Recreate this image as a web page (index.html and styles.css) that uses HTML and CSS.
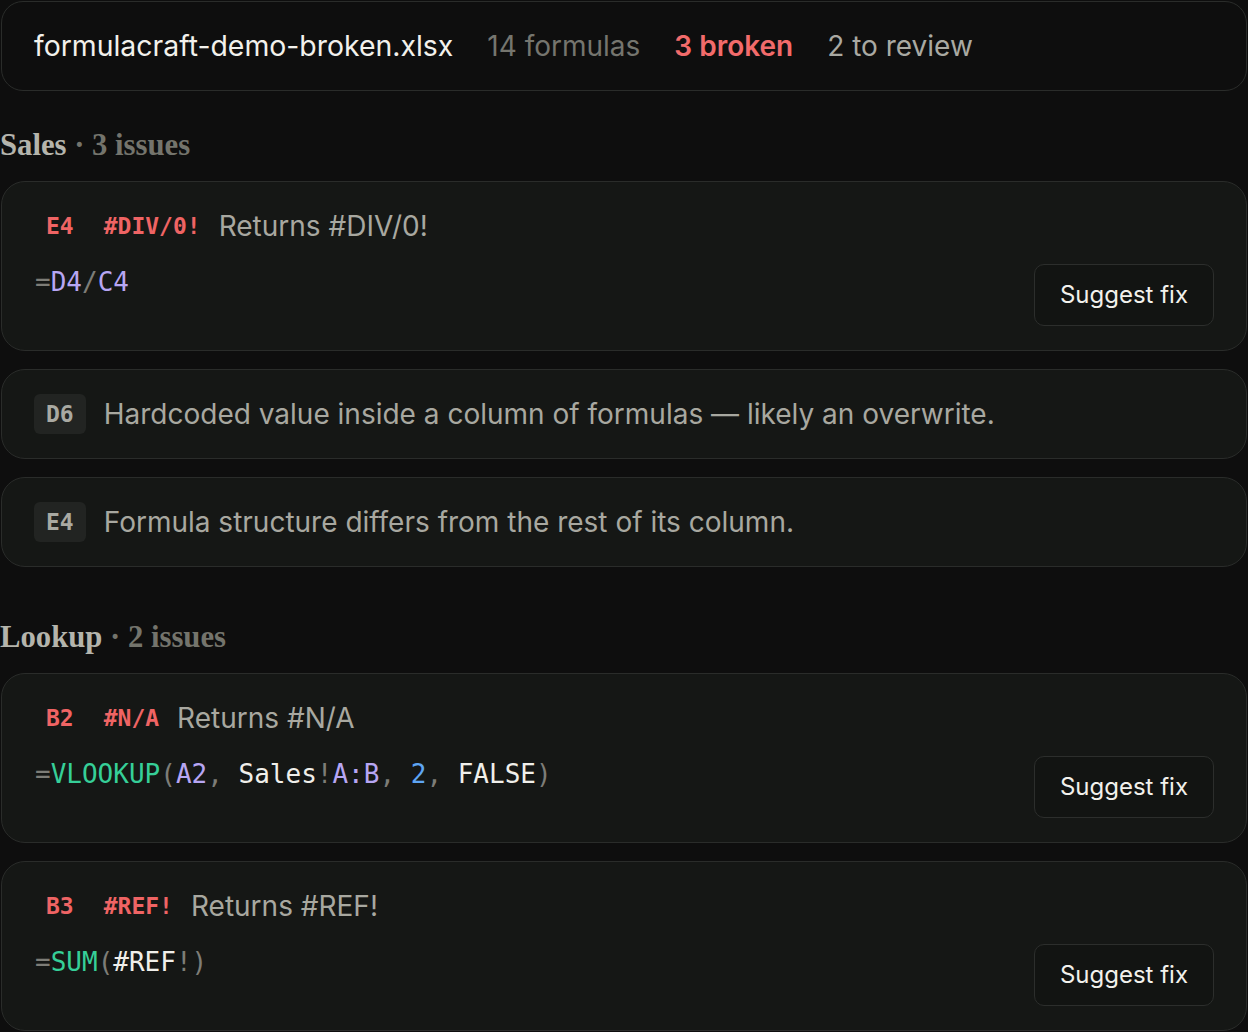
FILE: index.html
```html
<!DOCTYPE html>
<html lang="en">
<head>
  <meta charset="UTF-8">
  <meta name="viewport" content="width=device-width, initial-scale=1.0">
  <title>Formula check</title>
  <link rel="stylesheet" href="styles.css">
</head>
<body>
  <div class="summary">
    <span class="file-name">formulacraft-demo-broken.xlsx</span>
    <span class="muted">14 formulas</span>
    <span class="broken">3 broken</span>
    <span class="review">2 to review</span>
  </div>

  <h3 class="sheet-title">Sales <span class="count">· 3 issues</span></h3>
  <div class="issue error">
    <div class="issue-head">
      <span class="cell">E4</span>
      <span class="code">#DIV/0!</span>
      <span class="message">Returns #DIV/0!</span>
    </div>
    <div class="issue-body">
      <code class="formula"><span class="op">=</span><span class="ref">D4</span><span class="op">/</span><span class="ref">C4</span></code>
      <button class="fix-button">Suggest fix</button>
    </div>
  </div>
  <div class="issue">
    <div class="issue-head">
      <span class="cell tag">D6</span>
      <span class="message">Hardcoded value inside a column of formulas — likely an overwrite.</span>
    </div>
  </div>
  <div class="issue">
    <div class="issue-head">
      <span class="cell tag">E4</span>
      <span class="message">Formula structure differs from the rest of its column.</span>
    </div>
  </div>

  <h3 class="sheet-title lower">Lookup <span class="count">· 2 issues</span></h3>
  <div class="issue error">
    <div class="issue-head">
      <span class="cell">B2</span>
      <span class="code">#N/A</span>
      <span class="message">Returns #N/A</span>
    </div>
    <div class="issue-body">
      <code class="formula"><span class="op">=</span><span class="fn">VLOOKUP</span><span class="op">(</span><span class="ref">A2</span><span class="op">, </span><span class="txt">Sales</span><span class="op">!</span><span class="ref">A:B</span><span class="op">, </span><span class="num">2</span><span class="op">, </span><span class="txt">FALSE</span><span class="op">)</span></code>
      <button class="fix-button">Suggest fix</button>
    </div>
  </div>
  <div class="issue error">
    <div class="issue-head">
      <span class="cell">B3</span>
      <span class="code">#REF!</span>
      <span class="message">Returns #REF!</span>
    </div>
    <div class="issue-body">
      <code class="formula"><span class="op">=</span><span class="fn">SUM</span><span class="op">(</span><span class="txt">#REF</span><span class="op">!)</span></code>
      <button class="fix-button">Suggest fix</button>
    </div>
  </div>
</body>
</html>
```

FILE: styles.css
```css
body {
  font-family: Inter, "Noto Sans", sans-serif;
  background-color: #0e0e0e;
  color: #ecebe6;
  margin: 0;
  padding: 1px 1px 0 1px;
}
.summary {
  display: flex;
  align-items: center;
  gap: 34px;
  padding: 28px 32px;
  border: 1px solid #2a2c2a;
  border-radius: 22px;
  font-size: 28px;
  line-height: 32px;
}
.file-name {
  color: #f2f1ec;
  font-size: 28.4px;
}
.muted {
  color: #75756e;
}
.broken {
  color: #f26b6b;
  font-weight: 600;
}
.review {
  color: #a9a9a2;
}
.sheet-title {
  font-family: "Liberation Serif", "DejaVu Serif", serif;
  font-weight: bold;
  font-size: 30.7px;
  line-height: 36px;
  color: #b4b4ac;
  margin: 36px 0 18px -1px;
}
.sheet-title.lower {
  margin-top: 52px;
}
.count {
  color: #74746c;
}
.issue {
  background-color: #151715;
  border: 1px solid #2a2c2a;
  border-radius: 24px;
  padding: 24px 32px;
  margin-bottom: 18px;
}
.issue-head {
  display: flex;
  align-items: center;
  gap: 18px;
}
.cell, .code {
  font-family: "DejaVu Sans Mono", "Liberation Mono", monospace;
  font-size: 23px;
  font-weight: bold;
}
.cell {
  padding: 0 12px;
  line-height: 40px;
  border-radius: 6px;
  color: #a9a9a2;
}
.cell.tag {
  background-color: #222422;
}
.error .cell, .code {
  color: #ef6464;
}
.code {
  line-height: 40px;
}
.message {
  color: #a8a8a0;
  font-size: 28px;
}
.issue-body {
  display: flex;
  justify-content: space-between;
  align-items: flex-start;
  margin-top: 18px;
}
.formula {
  font-family: "DejaVu Sans Mono", "Liberation Mono", monospace;
  font-size: 26px;
  line-height: 36px;
  margin-left: 1px;
}
.op {
  color: #7d7d77;
}
.ref {
  color: #b7a6f3;
}
.fn {
  color: #36cf98;
}
.num {
  color: #5ea5f3;
}
.txt {
  color: #f0efea;
}
.fix-button {
  font-family: Inter, "Noto Sans", sans-serif;
  font-size: 24px;
  color: #f2f1ec;
  background-color: #121412;
  border: 1px solid #2c2e2c;
  border-radius: 10px;
  padding: 15px 25px;
  line-height: 30px;
  cursor: pointer;
}
.fix-button:hover {
  background-color: #1c1e1c;
}
```
